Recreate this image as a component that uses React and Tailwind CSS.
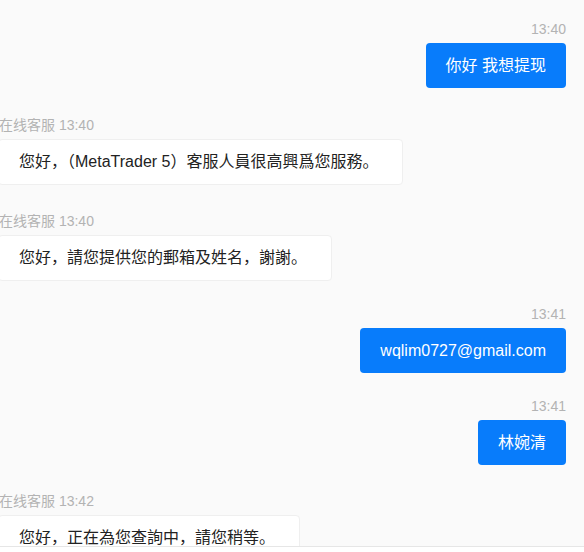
export default function App() {
  const font = { fontFamily: '"Liberation Sans", "Noto Sans CJK SC", sans-serif' };
  const Right = ({ time, text, className = "" }) => (
    <div className={"flex flex-col items-end " + className}>
      <div className="text-[14px] leading-[20px] text-[#b3b3b3] mb-[4px]">{time}</div>
      <div className="bg-[#087cfb] text-white text-[16px] h-[45px] px-[20px] rounded-[4px] flex items-center whitespace-nowrap">
        {text}
      </div>
    </div>
  );
  const Left = ({ time, text, className = "" }) => (
    <div className={"flex flex-col items-start ml-[-2px] " + className}>
      <div className="text-[14px] leading-[20px] text-[#b3b3b3] mb-[4px] ml-[1px]">在线客服 {time}</div>
      <div className="bg-white border border-[#efefef] text-[#222] text-[16px] h-[46px] pl-[20px] pr-[24px] rounded-[4px] flex items-center whitespace-nowrap">
        {text}
      </div>
    </div>
  );
  return (
    <div className="w-[584px] h-[552px] overflow-hidden bg-[#fafafa] flex flex-col" style={font}>
      <div className="flex-1 overflow-hidden pt-[19px] pr-[18px] flex flex-col">
        <Right time="13:40" text="你好 我想提现" />
        <Left className="mt-[27px]" time="13:40" text="您好，（MetaTrader 5）客服人員很高興爲您服務。" />
        <Left className="mt-[26px]" time="13:40" text="您好，請您提供您的郵箱及姓名，謝謝。" />
        <Right className="mt-[23px]" time="13:41" text="wqlim0727@gmail.com" />
        <Right className="mt-[23px]" time="13:41" text="林婉清" />
        <Left className="mt-[26px]" time="13:42" text="您好，正在為您查詢中，請您稍等。" />
      </div>
      <div className="h-[6px] shrink-0 border-t border-[#e6e6e6] bg-white"></div>
    </div>
  );
}
